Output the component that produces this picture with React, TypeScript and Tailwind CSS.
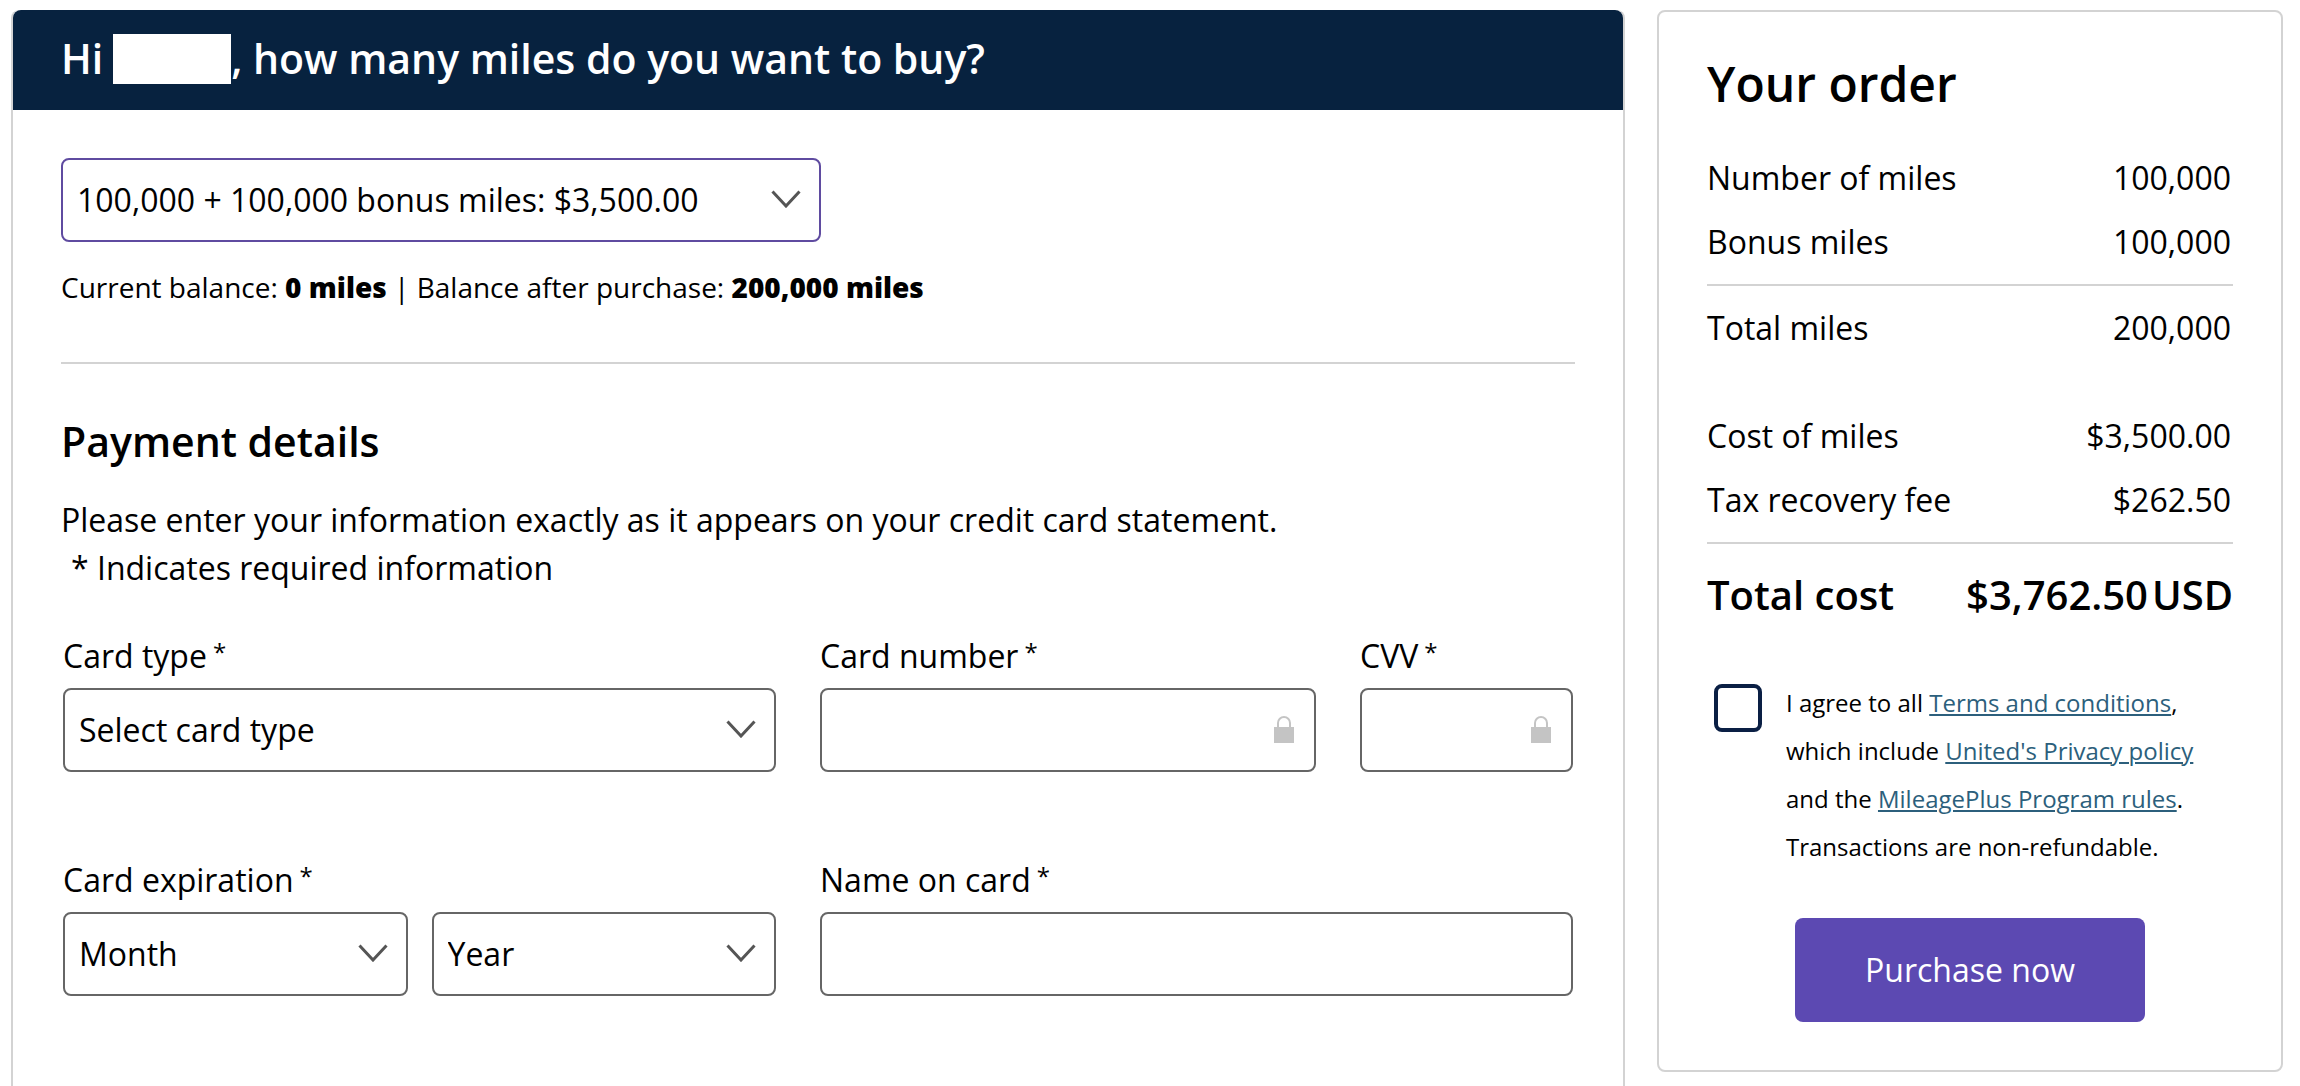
import { useId, useState } from "react";
import type { ReactNode } from "react";

const milesOptions = ["100,000 + 100,000 bonus miles: $3,500.00"];
const cardTypes = ["Select card type", "Visa", "Mastercard", "American Express", "Discover"];
const months = ["Month", "01", "02", "03", "04", "05", "06", "07", "08", "09", "10", "11", "12"];
const years = ["Year", "2024", "2025", "2026", "2027", "2028", "2029"];

function Chevron() {
  return (
    <svg
      viewBox="0 0 30 18"
      className="pointer-events-none absolute top-8 right-5 h-[18px] w-[30px]"
      fill="none"
      stroke="#555"
      strokeWidth="3"
      aria-hidden="true"
    >
      <path d="M1.500 1.500 15 16 28.500 1.500" />
    </svg>
  );
}

function Lock() {
  return (
    <svg
      viewBox="0 0 20 27"
      className="pointer-events-none absolute top-7 right-[22px] h-[27px] w-5"
      aria-hidden="true"
    >
      <path d="M4 12V7a6 6 0 0 1 12 0V12" fill="none" stroke="#c4c4c4" strokeWidth="2" />
      <rect y="11" width="20" height="16" fill="#c4c4c4" />
    </svg>
  );
}

function Select({
  id,
  label,
  options,
  accent,
}: {
  id?: string;
  label?: string;
  options: string[];
  accent?: boolean;
}) {
  return (
    <div className="relative">
      <select
        id={id}
        aria-label={label}
        className={
          accent
            ? "block h-[84px] w-full appearance-none rounded-lg border-2 border-[#5f4ba0] bg-white pr-14 pl-[14px] text-[32px]"
            : "block h-[84px] w-full appearance-none rounded-lg border-2 border-[#666] bg-white pr-14 pl-[14px] text-[32px]"
        }
      >
        {options.map((option) => (
          <option key={option}>{option}</option>
        ))}
      </select>
      <Chevron />
    </div>
  );
}

function TextField({ id, secure }: { id: string; secure?: boolean }) {
  return (
    <div className="relative">
      <input
        id={id}
        type="text"
        className="block h-[84px] w-full rounded-lg border-2 border-[#666] bg-white px-[14px] text-[32px]"
      />
      {secure && <Lock />}
    </div>
  );
}

function Label({ htmlFor, children }: { htmlFor: string; children: ReactNode }) {
  return (
    <label htmlFor={htmlFor} className="mb-2 flex h-12 items-start gap-[6px] text-[32px] leading-[48px]">
      {children}
      <span className="text-[24px] leading-10">*</span>
    </label>
  );
}

function OrderRow({ name, value }: { name: string; value: string }) {
  return (
    <div className="flex h-16 justify-between pr-[2px] text-[32px] leading-[64px]">
      <dt>{name}</dt>
      <dd>{value}</dd>
    </div>
  );
}

function TermsLink({ children }: { children: ReactNode }) {
  return (
    <a href="#" className="text-[#2c5f7c] underline decoration-2 underline-offset-2">
      {children}
    </a>
  );
}

function OrderSummary() {
  const [agreed, setAgreed] = useState(false);
  const agreeId = useId();

  return (
    <aside className="w-[626px] shrink-0 rounded-lg border-2 border-[#d3d3d3] px-12 pt-10 pb-12">
      <h2 className="text-[48px] leading-[64px] font-semibold">Your order</h2>
      <dl className="mt-[30px]">
        <OrderRow name="Number of miles" value="100,000" />
        <OrderRow name="Bonus miles" value="100,000" />
        <div className="my-[10px] border-t-2 border-[#d3d3d3]" />
        <OrderRow name="Total miles" value="200,000" />
        <div className="h-11" />
        <OrderRow name="Cost of miles" value="$3,500.00" />
        <OrderRow name="Tax recovery fee" value="$262.50" />
        <div className="my-[10px] border-t-2 border-[#d3d3d3]" />
        <div className="mt-4 flex h-[70px] justify-between text-[40px] leading-[70px] font-semibold">
          <dt>Total cost</dt>
          <dd className="flex gap-1">
            <span>$3,762.50</span>
            <span>USD</span>
          </dd>
        </div>
      </dl>
      <div className="mt-[54px] flex items-start gap-6 pl-[7px]">
        <input
          id={agreeId}
          type="checkbox"
          checked={agreed}
          onChange={(e) => setAgreed(e.target.checked)}
          className="size-12 shrink-0 appearance-none rounded-lg border-4 border-[#0a1f44] checked:bg-[#0a1f44]"
        />
        <label htmlFor={agreeId} className="-mt-[5px] text-[24px] leading-[48px]">
          I agree to all <TermsLink>Terms and conditions</TermsLink>,<br />
          which include <TermsLink>United's Privacy policy</TermsLink>
          <br />
          and the <TermsLink>MileagePlus Program rules</TermsLink>.<br />
          Transactions are non-refundable.
        </label>
      </div>
      <button
        type="button"
        className="mx-auto mt-[47px] block h-[104px] w-[350px] rounded-lg bg-[#5c49b2] text-[32px] text-white"
      >
        Purchase now
      </button>
    </aside>
  );
}

export default function App() {
  return (
    <div className="flex min-h-screen items-start gap-8 bg-white pt-[10px] pr-[17px] pl-[11px] font-['Open_Sans','Noto_Sans',sans-serif] text-black">
      <main className="min-h-[1076px] flex-1 self-stretch rounded-t-lg border-x-2 border-[#d3d3d3]">
        <h1 className="flex h-[100px] items-center rounded-t-lg bg-[#07223f] px-12 pb-[2px] text-[41px] font-semibold text-white">
          Hi
          <span className="ml-[10px] h-[50px] w-[118px] bg-white" />, how many miles do you want to buy?
        </h1>
        <form className="px-12 pt-12" onSubmit={(e) => e.preventDefault()}>
          <div className="max-w-[760px]">
            <Select label="Miles to buy" options={milesOptions} accent />
          </div>
          <p className="mt-6 text-[28px] leading-[42px]">
            Current balance: <b className="font-extrabold">0 miles</b> | Balance after purchase:{" "}
            <b className="font-extrabold">200,000 miles</b>
          </p>
          <hr className="mt-[54px] border-t-2 border-[#d3d3d3]" />
          <h2 className="mt-12 text-[41px] leading-[58px] font-semibold">Payment details</h2>
          <p className="mt-[26px] text-[32px] leading-[48px]">
            Please enter your information exactly as it appears on your credit card statement.
          </p>
          <p className="pl-[10px] text-[32px] leading-[48px]">* Indicates required information</p>
          <div className="mt-10 grid grid-cols-[714fr_754fr] gap-x-11 gap-y-[84px] px-[2px]">
            <div>
              <Label htmlFor="card-type">Card type</Label>
              <Select id="card-type" options={cardTypes} />
            </div>
            <div className="grid grid-cols-[496fr_213fr] gap-x-11">
              <div>
                <Label htmlFor="card-number">Card number</Label>
                <TextField id="card-number" secure />
              </div>
              <div>
                <Label htmlFor="cvv">CVV</Label>
                <TextField id="cvv" secure />
              </div>
            </div>
            <div>
              <Label htmlFor="month">Card expiration</Label>
              <div className="grid grid-cols-2 gap-6">
                <Select id="month" options={months} />
                <Select label="Expiration year" options={years} />
              </div>
            </div>
            <div>
              <Label htmlFor="card-name">Name on card</Label>
              <TextField id="card-name" />
            </div>
          </div>
        </form>
      </main>
      <OrderSummary />
    </div>
  );
}
